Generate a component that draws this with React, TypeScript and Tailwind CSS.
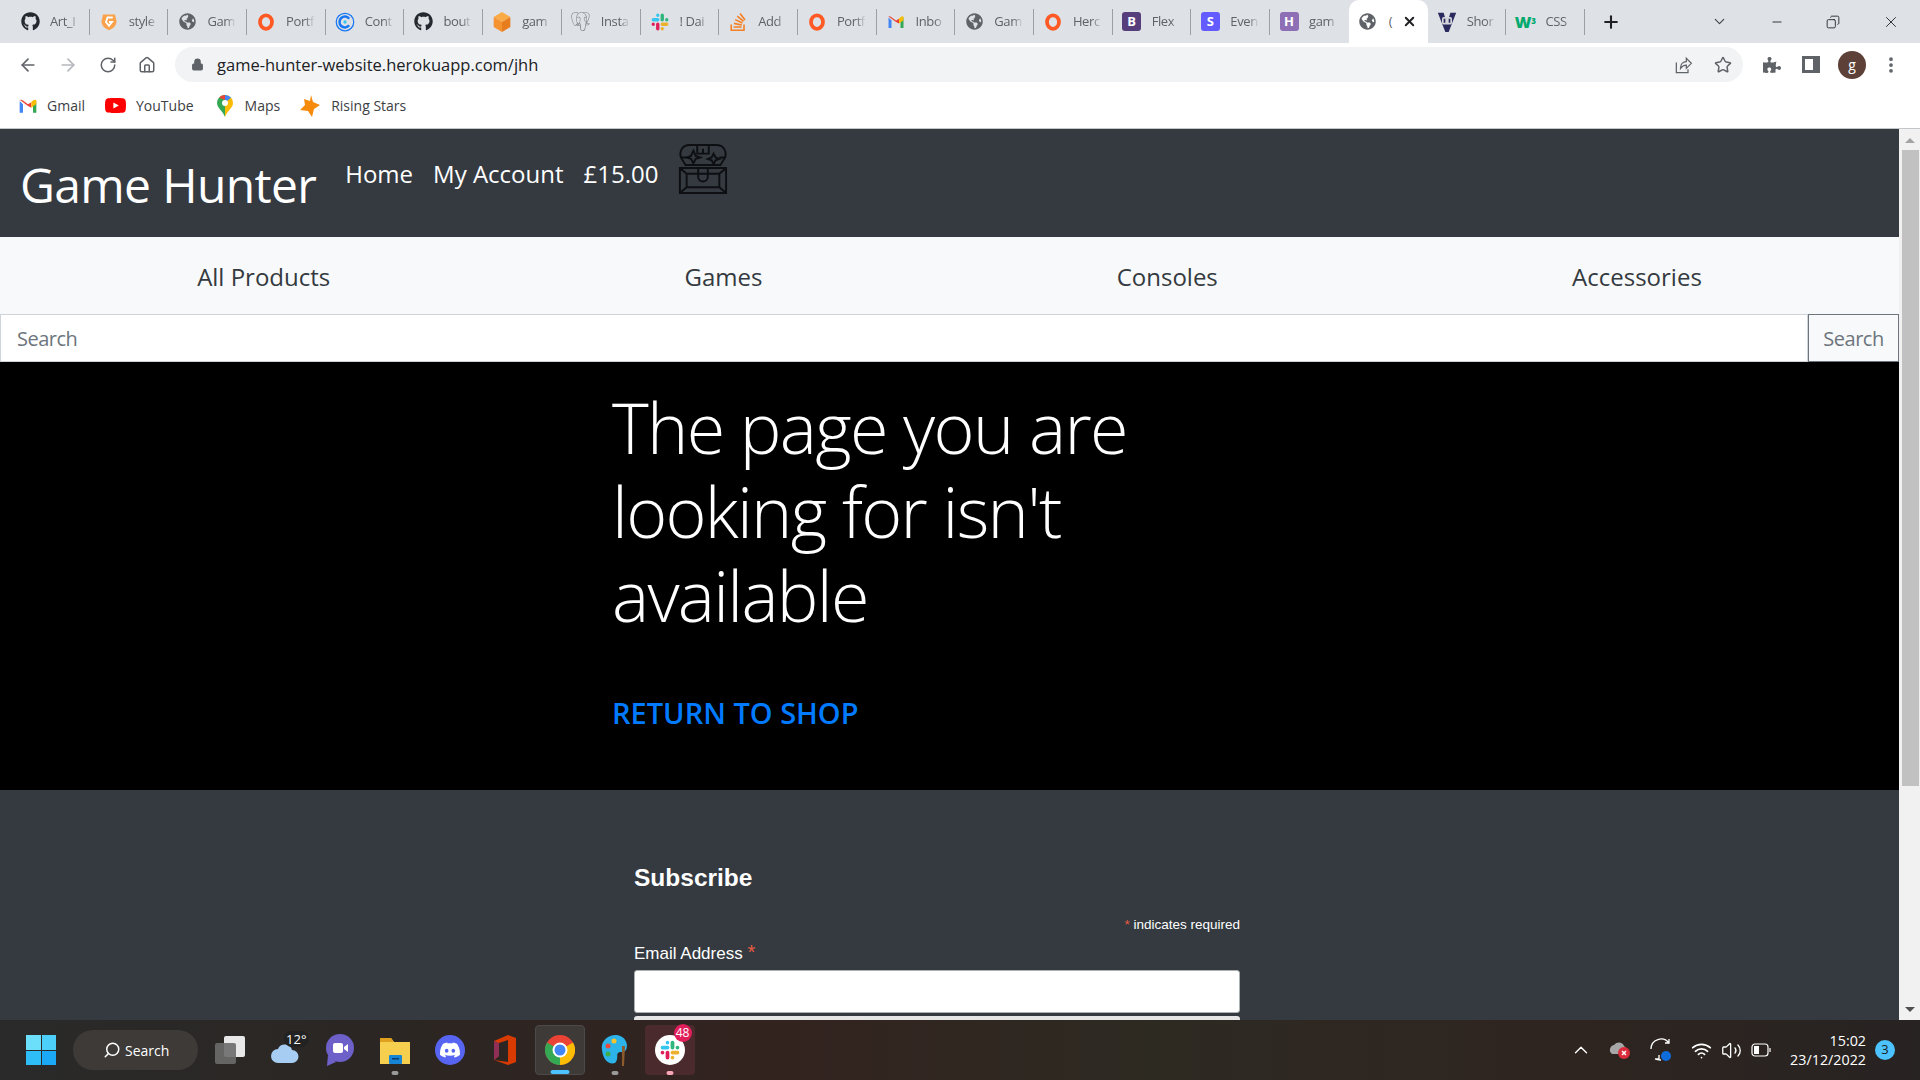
import type { ReactNode } from "react";
import {
  ArrowLeft,
  ArrowRight,
  ChevronDown,
  ChevronUp,
  Copy,
  House,
  Lock,
  Minus,
  MoreVertical,
  Plus,
  RotateCw,
  Search,
  Star,
  Volume2,
  Wifi,
  X,
} from "lucide-react";
import { FaGithub, FaGlobeAmericas, FaPuzzlePiece } from "react-icons/fa";
import { SiDiscord, SiPostgresql, SiStackoverflow, SiYoutube } from "react-icons/si";

function GmailIcon({ size = 18 }: { size?: number }) {
  return (
    <svg width={size} height={size} viewBox="0 0 24 24">
      <path d="M2 6v14h4V10z" fill="#4285f4" />
      <path d="M22 6v14h-4V10z" fill="#34a853" />
      <path d="M2 4.500 12 12l4 2V7.500L12 10 6 5.500C4 4 2 4 2 6z" fill="#ea4335" />
      <path d="M22 6c0-2-2-2-4-.5L16 7v7l6-4.500z" fill="#fbbc04" />
    </svg>
  );
}

function SlackIcon({ size = 18 }: { size?: number }) {
  return (
    <svg width={size} height={size} viewBox="0 0 24 24" strokeWidth="4.500" strokeLinecap="round">
      <path d="M9 3v0M9 9H3" stroke="#36c5f0" />
      <path d="M21 9h0M15 3v6" stroke="#2eb67d" />
      <path d="M15 21h0M15 15h6" stroke="#ecb22e" />
      <path d="M3 15h0M9 15v6" stroke="#e01e5a" />
    </svg>
  );
}

function PortIcon() {
  return (
    <svg width="18" height="18" viewBox="0 0 24 24">
      <ellipse cx="12" cy="12" rx="8" ry="9" fill="none" stroke="#ff5a26" strokeWidth="5" />
    </svg>
  );
}

function Globe() {
  return <FaGlobeAmericas size={17} color="#5f6368" />;
}

function Github() {
  return <FaGithub size={19} color="#24292f" />;
}

function LetterIcon({ letter, color }: { letter: string; color: string }) {
  return (
    <span
      className="flex h-[19px] w-[19px] items-center justify-center rounded-[3px] text-[13px] font-bold text-white"
      style={{ backgroundColor: color }}
    >
      {letter}
    </span>
  );
}

const tabs: { title: string; icon: ReactNode; active?: boolean }[] = [
  { title: "Art_I", icon: <Github /> },
  {
    title: "style",
    icon: (
      <svg width="18" height="20" viewBox="0 0 24 26">
        <path d="M4 3h16l2 9c0 6-5 10-10 12C7 22 2 18 2 12z" fill="#f9a24b" />
        <path d="M17 7h-7l-2 6 4 5 4-5h-4" fill="none" stroke="#fff" strokeWidth="2.500" />
      </svg>
    ),
  },
  { title: "Gam", icon: <Globe /> },
  { title: "Portf", icon: <PortIcon /> },
  {
    title: "Cont",
    icon: (
      <svg width="20" height="20" viewBox="0 0 24 24" fill="none">
        <circle cx="12" cy="12" r="10.500" stroke="#1877f2" strokeWidth="1.500" />
        <path d="M17 8a6.500 6.500 0 1 0 0 8" stroke="#1877f2" strokeWidth="3" />
        <circle cx="12" cy="12" r="2" fill="#35c5f0" />
      </svg>
    ),
  },
  { title: "bout", icon: <Github /> },
  {
    title: "gam",
    icon: (
      <svg width="20" height="22" viewBox="0 0 24 26">
        <path d="M12 1 22 7 12 13 2 7z" fill="#fbab45" />
        <path d="M2 7v12l10 6V13z" fill="#f59331" />
        <path d="M22 7v12l-10 6V13z" fill="#e87d1e" />
      </svg>
    ),
  },
  { title: "Insta", icon: <SiPostgresql size={19} color="#7d8387" /> },
  { title: "! Dai", icon: <SlackIcon /> },
  { title: "Add", icon: <SiStackoverflow size={18} color="#f48024" /> },
  { title: "Portf", icon: <PortIcon /> },
  { title: "Inbo", icon: <GmailIcon /> },
  { title: "Gam", icon: <Globe /> },
  { title: "Herc", icon: <PortIcon /> },
  { title: "Flex", icon: <LetterIcon letter="B" color="#563d7c" /> },
  { title: "Even", icon: <LetterIcon letter="S" color="#635bff" /> },
  { title: "gam", icon: <LetterIcon letter="H" color="#8e6fb5" /> },
  { title: "(", icon: <Globe />, active: true },
  {
    title: "Shor",
    icon: (
      <svg width="20" height="22" viewBox="0 0 24 26">
        <path d="M1 2h7l4 14 4-14h7l-9 23h-4z" fill="#2a2a5e" />
        <rect x="6" y="7" width="12" height="9" rx="2" fill="#d5d6da" />
        <path d="M9 14v-5M15 9v5" stroke="#2a2a5e" strokeWidth="2" />
      </svg>
    ),
  },
  {
    title: "CSS",
    icon: (
      <span className="text-[16px] leading-none font-extrabold text-[#04aa6d]">
        W<sup className="text-[8px]">3</sup>
      </span>
    ),
  },
];

function TabStrip() {
  return (
    <div className="flex h-[43px] shrink-0 items-center bg-[#dee1e6] pl-[11px]">
      {tabs.map((tab, i) =>
        tab.active ? (
          <div key={i} className="flex h-full w-[79px] shrink-0 items-center rounded-t-[10px] bg-white pl-[9px]">
            <span className="flex w-[20px] shrink-0 justify-center">{tab.icon}</span>
            <span className="ml-[11px] w-[7px] overflow-hidden text-[13px] text-[#5f6368]">{tab.title}</span>
            <X size={15} strokeWidth={3} className="ml-[6px] text-[#202124]" />
          </div>
        ) : (
          <div
            key={i}
            className={`flex h-[26px] w-[78.7px] shrink-0 items-center pl-[9px] ${
              tabs[i + 1]?.active ? "" : "border-r border-[#9aa0a6]"
            }`}
          >
            <span className="flex w-[20px] shrink-0 justify-center">{tab.icon}</span>
            <span className="ml-[10px] w-[29px] overflow-hidden text-[13px] tracking-[-0.4px] whitespace-nowrap text-[#5f6368] [mask-image:linear-gradient(90deg,#000_65%,transparent)]">
              {tab.title}
            </span>
          </div>
        ),
      )}
      <Plus size={20} strokeWidth={2.500} className="ml-[16px] text-[#202124]" />
      <div className="ml-auto flex items-center">
        <ChevronDown size={17} strokeWidth={1.500} className="mr-[42px] text-[#3c4043]" />
        <Minus size={14} strokeWidth={1.500} className="mr-[42px] text-[#202124]" />
        <Copy size={14} strokeWidth={1.500} className="mr-[42px] -scale-x-100 text-[#202124]" />
        <X size={18} strokeWidth={1.200} className="mr-[20px] text-[#202124]" />
      </div>
    </div>
  );
}

function AddressBar() {
  return (
    <div className="flex h-[43px] shrink-0 items-center bg-white pl-[18px]">
      <ArrowLeft size={20} className="text-[#5f6368]" />
      <ArrowRight size={20} className="ml-[20px] text-[#b4b7bb]" />
      <RotateCw size={18} className="ml-[21px] text-[#5f6368]" />
      <House size={18} className="ml-[21px] text-[#5f6368]" />
      <div className="ml-[19px] flex h-[35px] w-[1568px] items-center rounded-full bg-[#f1f3f4] pl-[16px]">
        <Lock size={13} fill="#5f6368" className="text-[#5f6368]" />
        <span className="ml-[13px] pt-[2px] text-[16.500px] text-[#202124]">game-hunter-website.herokuapp.com/jhh</span>
        <svg width="20" height="20" viewBox="0 0 24 24" fill="none" stroke="#5f6368" strokeWidth="1.500" className="ml-auto">
          <path d="M4 9v12h14v-4M9 16c0-5 3-8 7-8V4l6 6-6 6v-4c-3 0-5 1-7 4z" />
        </svg>
        <Star size={18} strokeWidth={2} className="mr-[11px] ml-[21px] text-[#5f6368]" />
      </div>
      <FaPuzzlePiece size={18} color="#5f6368" className="ml-[20px]" />
      <span className="ml-[21px] h-[17px] w-[18px] border-[3px] border-r-[7px] border-[#5f6368]" />
      <span className="ml-[18px] flex h-[28px] w-[28px] items-center justify-center rounded-full bg-[#5d4037] text-[14px] text-white">
        g
      </span>
      <MoreVertical size={20} strokeWidth={2.500} className="ml-[15px] text-[#5f6368]" />
    </div>
  );
}

function Bookmark({ icon, label, gap }: { icon: ReactNode; label: string; gap: string }) {
  return (
    <div className={`flex items-center ${gap}`}>
      {icon}
      <span className="text-[14px] text-[#3c4043]">{label}</span>
    </div>
  );
}

function Bookmarks() {
  return (
    <div className="flex h-[43px] shrink-0 items-center gap-[20px] border-b border-[#c4c7c9] bg-white pb-[3px] pl-[18px]">
      <Bookmark icon={<GmailIcon size={20} />} label="Gmail" gap="gap-[9px]" />
      <Bookmark icon={<SiYoutube size={21} color="#f00" />} label="YouTube" gap="gap-[10px]" />
      <Bookmark
        icon={
          <svg width="16" height="22" viewBox="0 0 16 22" className="ml-[3px]">
            <path d="M8 0a8 8 0 0 1 8 8c0 5-6 8-8 14z" fill="#fbbc04" />
            <path d="M8 0a8 8 0 0 0-8 8c0 5 6 8 8 14z" fill="#34a853" />
            <path d="M2 2.500A8 8 0 0 1 8 0v5z" fill="#ea4335" />
            <path d="M8 0a8 8 0 0 1 6 2.500L8 8z" fill="#4285f4" />
            <circle cx="8" cy="8" r="3" fill="#fff" />
          </svg>
        }
        label="Maps"
        gap="gap-[12px]"
      />
      <Bookmark
        icon={
          <svg width="20" height="22" viewBox="0 0 20 22">
            <path d="m11 0 2 7 7 3-6 4-2 8-4-6-8-1 5-5-1-6 6 2z" fill="#f58a0b" />
          </svg>
        }
        label="Rising Stars"
        gap="gap-[11px]"
      />
    </div>
  );
}

function ChestIcon() {
  return (
    <svg width="50" height="50" viewBox="0 0 52 52" fill="none" stroke="#0d0f12" strokeWidth="2">
      <path d="M8 22 3 14C1 7 5 1 12 1h28c7 0 11 6 9 13l-5 8z" />
      <path d="M20 1v9h12V1M26 5v5M3 14h6M43 14h6M8 22h36" />
      <path d="m16 7 2.500 5.500L23 14l-4.500 1.500L16 20l-2.500-4.500L9 14l4.500-1.500z" />
      <path d="m37 10 2 4 4 1.500-4 1.500-2 4-2-4-4-1.500 4-1.500z" />
      <path d="M2 25h48v26H2zM9 31h34v14H9zM2 25l7 6M50 25l-7 6M2 51l7-6M50 51l-7-6" />
      <path d="M21 25v9a5 5 0 0 0 10 0v-9" />
    </svg>
  );
}

function PageHeader() {
  return (
    <header className="flex h-[108px] shrink-0 bg-[#343a40] pl-[20px] text-white">
      <span className="mt-[24px] h-fit text-[48px] leading-[64px] tracking-[-0.65px]">Game Hunter</span>
      <nav className="mt-[15px] ml-[29px] flex h-[52px] items-start gap-[20px] text-[24px]">
        <a className="mt-[14px] leading-[32px]">Home</a>
        <a className="mt-[14px] leading-[32px]">My Account</a>
        <a className="mt-[14px] leading-[32px]">£15.00</a>
        <ChestIcon />
      </nav>
    </header>
  );
}

function CategoryNav() {
  return (
    <nav className="flex h-[77px] shrink-0 items-center justify-around bg-[#f8f9fa] px-[20px] pt-[2px] text-[24px] text-[#343a40]">
      <a>All Products</a>
      <a>Games</a>
      <a>Consoles</a>
      <a>Accessories</a>
    </nav>
  );
}

function SearchRow() {
  return (
    <div className="flex h-[48px] shrink-0 text-[20px] tracking-[-0.5px] text-[#6c757d]">
      <div className="flex flex-1 items-center border border-[#ced4da] bg-white pt-[2px] pl-[16px]">Search</div>
      <button className="w-[91px] border border-[#6c757d] bg-[#f8f9fa] pt-[2px]">Search</button>
    </div>
  );
}

function Hero() {
  return (
    <section className="h-[428px] shrink-0 bg-black pt-[23px] text-white">
      <div className="mx-auto w-[675px]">
        <h1 className="w-[600px] text-[70px] leading-[84px] font-light tracking-[-1.7px]">
          The page you are looking for isn't available
        </h1>
        <a className="mt-[59px] block text-[29px] leading-[34px] font-semibold text-[#007bff]">RETURN TO SHOP</a>
      </div>
    </section>
  );
}

function Subscribe() {
  return (
    <section className="flex-1 bg-[#343a40] font-['Liberation_Sans',sans-serif] text-white">
      <div className="mx-auto w-[675px] pt-[73px] pr-[47px] pl-[22px]">
        <h2 className="text-[24.500px] leading-[30px] font-bold">Subscribe</h2>
        <p className="mt-[23px] text-right text-[13.500px] leading-[18px]">
          <span className="text-[#e85c41]">*</span> indicates required
        </p>
        <label className="mt-[8px] block h-[20px] text-[17px] leading-[20px]">
          Email Address <span className="text-[20px] leading-none text-[#e85c41]">*</span>
        </label>
        <div className="mt-[8px] h-[43px] rounded-[3px] border border-[#abb0b2] bg-white" />
        <div className="mt-[3px] h-[40px] rounded-[3px] bg-[#e5e5e5]" />
      </div>
    </section>
  );
}

function Scrollbar() {
  return (
    <div className="flex w-[21px] shrink-0 flex-col items-center bg-[#f1f1f1] pl-[1px]">
      <span className="mt-[9px] h-0 w-0 border-x-[5px] border-b-[5px] border-x-transparent border-b-[#a3a3a3]" />
      <div className="mt-[7px] h-[636px] w-[17px] bg-[#c1c1c1]" />
      <span className="mt-auto mb-[8px] h-0 w-0 border-x-[5px] border-t-[5px] border-x-transparent border-t-[#505050]" />
    </div>
  );
}

function TaskButton({ children, className = "" }: { children: ReactNode; className?: string }) {
  return (
    <div className="flex w-[55px] justify-center">
      <div className={`relative flex h-[50px] w-[50px] items-center justify-center ${className}`}>{children}</div>
    </div>
  );
}

function Dot({ color = "bg-[#9a9a9a]", wide = false }: { color?: string; wide?: boolean }) {
  return (
    <span
      className={`absolute bottom-[0px] left-1/2 h-[4px] -translate-x-1/2 rounded-full ${wide ? "w-[19px]" : "w-[7px]"} ${color}`}
    />
  );
}

function Taskbar() {
  return (
    <div className="flex h-[60px] shrink-0 items-center bg-[linear-gradient(90deg,#2a2a2a,#2b2623_20%,#33231f_40%,#2d2a22_60%,#2f2520_80%,#272322)] pl-[26px] text-white">
      <div className="grid h-[30px] w-[30px] grid-cols-2 gap-[1px]">
        <span className="bg-[#6ce0fb]" />
        <span className="bg-[#4cd0fa]" />
        <span className="bg-[#2fbdf8]" />
        <span className="bg-[#1ba8f5]" />
      </div>
      <div className="ml-[17px] flex h-[40px] w-[125px] items-center rounded-full bg-[#3d3a38] pl-[30px]">
        <Search size={18} className="-scale-x-100" />
        <span className="ml-[4px] text-[14px]">Search</span>
      </div>
      <div className="ml-[4px] flex items-center">
        <TaskButton>
          <span className="relative h-[28px] w-[30px]">
            <span className="absolute top-0 right-0 h-[21px] w-[21px] rounded-[2px] bg-[#e8e8e8]" />
            <span className="absolute bottom-0 left-0 h-[21px] w-[21px] rounded-[2px] bg-[#6b6b6b]/90" />
          </span>
        </TaskButton>
        <TaskButton>
          <svg width="30" height="26" viewBox="0 0 30 26" className="mt-[4px]">
            <path d="M8 24a7 7 0 0 1 0-14c2-6 12-6 14 1a6 6 0 0 1 0 13z" fill="#a8cdf3" />
          </svg>
          <span className="absolute top-[6px] right-[1px] rounded-full bg-[#222] px-[2px] text-[13px] leading-[16px]">
            12°
          </span>
        </TaskButton>
        <TaskButton>
          <svg width="30" height="34" viewBox="0 0 30 34">
            <circle cx="15" cy="15" r="14" fill="#6d60c8" />
            <path d="M3 22 2 33l9-4z" fill="#6d60c8" />
            <rect x="8" y="10" width="10" height="10" rx="2" fill="#fff" />
            <path d="m19 14 4-3v8l-4-3z" fill="#fff" />
          </svg>
        </TaskButton>
        <TaskButton>
          <svg width="30" height="28" viewBox="0 0 30 28">
            <path d="M0 2h11l3 4h16v22H0z" fill="#f7cf4f" />
            <path d="M0 2h11l3 4H0z" fill="#dea01e" />
            <rect x="9" y="19" width="13" height="9" rx="1" fill="#1685d6" />
            <rect x="12" y="22" width="7" height="1.500" fill="#0a3d6b" />
          </svg>
          <Dot />
        </TaskButton>
        <TaskButton>
          <span className="flex h-[30px] w-[30px] items-center justify-center rounded-full bg-[#5865f2]">
            <SiDiscord size={20} color="#fff" />
          </span>
        </TaskButton>
        <TaskButton>
          <svg width="24" height="32" viewBox="0 0 24 32">
            <path d="M1 7 15 1l8 3v24l-8 3-14-5 14 2V6L6 9v13l-5 4z" fill="#d83b01" />
            <path d="M1 7v19l5-4V9z" fill="#8f2f55" />
          </svg>
        </TaskButton>
        <TaskButton className="rounded-[4px] border border-[#4a4a4a] bg-[#3d3a38]">
          <svg width="30" height="30" viewBox="0 0 30 30">
            <circle cx="15" cy="15" r="15" fill="#ea4335" />
            <path d="M15 15 28 7.500A15 15 0 0 1 15 30z" fill="#fbbc04" />
            <path d="M15 15 15 30A15 15 0 0 1 2 7.500z" fill="#34a853" />
            <circle cx="15" cy="15" r="7.500" fill="#fff" />
            <circle cx="15" cy="15" r="5.500" fill="#4285f4" />
          </svg>
          <Dot color="bg-[#4cc2ff]" wide />
        </TaskButton>
        <TaskButton>
          <svg width="30" height="32" viewBox="0 0 30 32">
            <path d="M2 16C0 6 10 0 17 1c8 1 12 9 9 15-2 3-6 1-8 3s1 6-3 10C9 31 3 26 2 16z" fill="#2bb3ea" />
            <circle cx="8" cy="12" r="2.500" fill="#e84b3c" />
            <circle cx="14" cy="7" r="2.500" fill="#f4c430" />
            <circle cx="8" cy="20" r="2.500" fill="#3fae49" />
            <path d="M22 12h3l-1 20h-2z" fill="#8d5a2b" />
          </svg>
          <Dot />
        </TaskButton>
        <TaskButton className="rounded-[4px] bg-[#4a2a2c]">
          <span className="flex h-[30px] w-[30px] items-center justify-center rounded-full bg-white">
            <SlackIcon size={20} />
          </span>
          <span className="absolute top-[-1px] right-[3px] flex h-[18px] w-[18px] items-center justify-center rounded-full bg-[#e01e5a] text-[12px] leading-none">
            48
          </span>
          <Dot color="bg-[#f7a8b8]" />
        </TaskButton>
      </div>
      <div className="ml-auto flex items-center">
        <ChevronUp size={22} strokeWidth={1.500} />
        <svg width="22" height="20" viewBox="0 0 22 20" className="ml-[17px]">
          <path d="M3 14a5 5 0 0 1 2-9c3-4 9-3 10 1 3 1 3 8-1 8z" fill="#a7a7a7" />
          <circle cx="15" cy="13" r="6" fill="#d92b3a" />
          <path d="m13 11 4 4m0-4-4 4" stroke="#fff" strokeWidth="1.500" />
        </svg>
        <svg width="24" height="24" viewBox="0 0 24 24" fill="none" stroke="#fff" strokeWidth="1.300" className="ml-[19px]">
          <path d="M1 11A10 10 0 0 1 19 5M19 1v4h-4M5 21h4v-4M5 21c2 1 4 1 6 1" />
          <circle cx="16" cy="18" r="5" fill="#0f6cdb" stroke="none" />
        </svg>
        <Wifi size={21} strokeWidth={2} className="ml-[17px]" />
        <Volume2 size={21} strokeWidth={1.500} className="ml-[9px]" />
        <svg width="20" height="14" viewBox="0 0 20 14" fill="none" stroke="#fff" strokeWidth="1.200" className="ml-[9px]">
          <rect x="1" y="1" width="16" height="12" rx="3" />
          <path d="M19 5v4" />
          <rect x="3" y="3" width="5" height="8" fill="#fff" stroke="none" />
        </svg>
        <div className="ml-[19px] text-right text-[14.300px] leading-[19px]">
          <div>15:02</div>
          <div>23/12/2022</div>
        </div>
        <span className="mr-[25px] ml-[9px] flex h-[20px] w-[20px] items-center justify-center rounded-full bg-[#4cc2ff] text-[13px] text-[#1c1c1c]">
          3
        </span>
      </div>
    </div>
  );
}

export default function App() {
  return (
    <div className="flex h-[1080px] w-[1920px] flex-col overflow-hidden bg-white font-['Open_Sans',sans-serif]">
      <TabStrip />
      <AddressBar />
      <Bookmarks />
      <div className="flex min-h-0 flex-1">
        <main className="flex min-w-0 flex-1 flex-col overflow-hidden">
          <PageHeader />
          <CategoryNav />
          <SearchRow />
          <Hero />
          <Subscribe />
        </main>
        <Scrollbar />
      </div>
      <Taskbar />
    </div>
  );
}
